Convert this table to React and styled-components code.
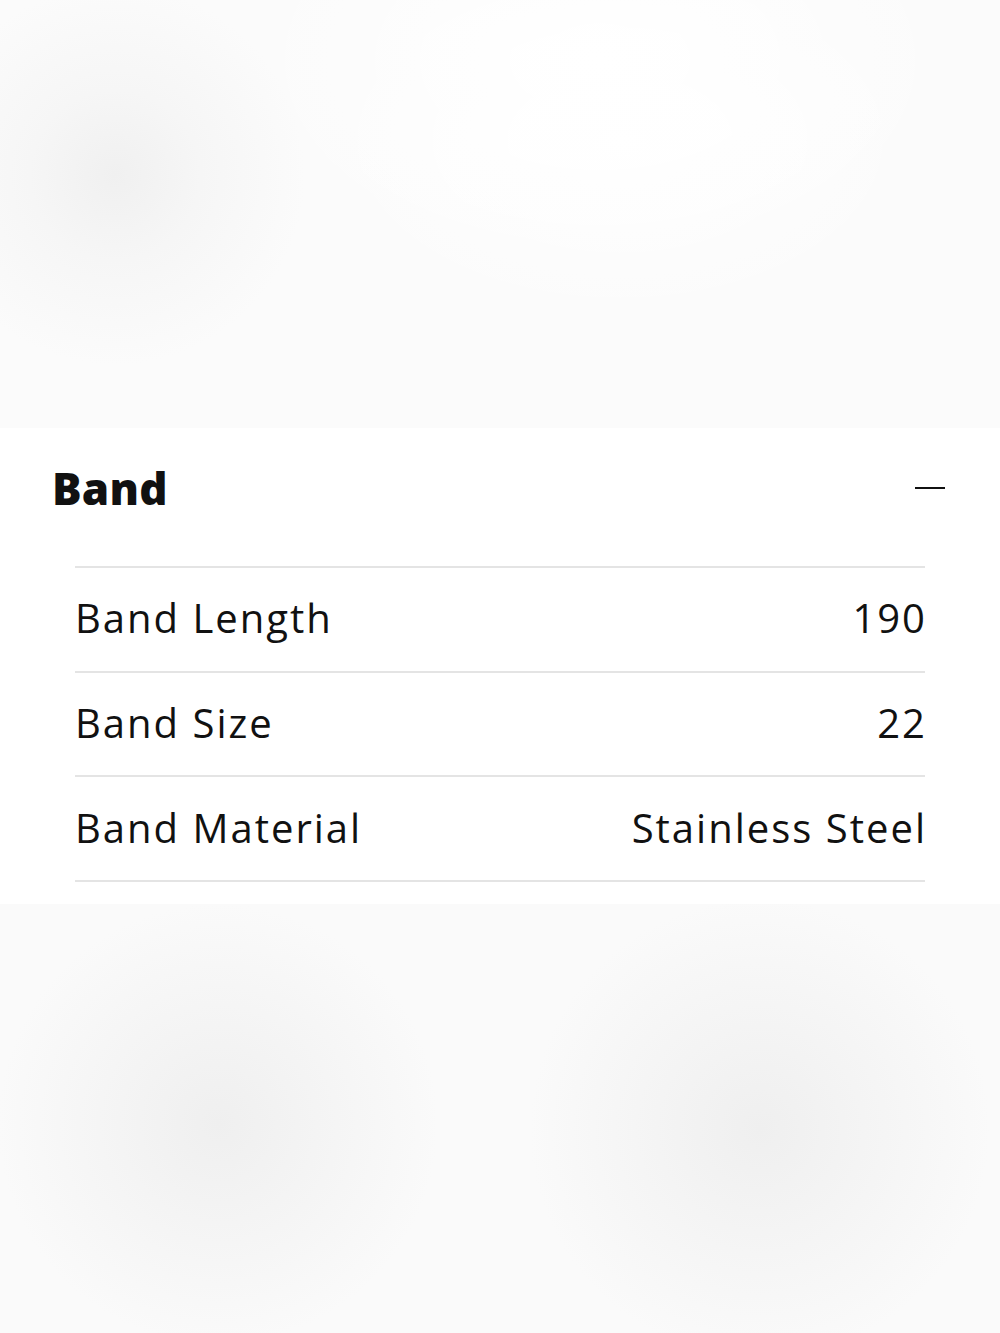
import React from 'react'
import styled, { createGlobalStyle } from 'styled-components'

const GlobalStyle = createGlobalStyle`
  html, body {
    margin: 0;
    padding: 0;
    background: #fafafa;
  }
  body {
    font-family: "Open Sans", "Liberation Sans", sans-serif;
    color: #111;
  }
`

const Page = styled.div`
  width: 1000px;
  min-height: 1333px;
  display: flex;
  flex-direction: column;
  background: #fafafa;
`

const Backdrop = styled.div`
  height: ${props => props.h}px;
  background: ${props => props.bg};
`

const Panel = styled.section`
  background: #fff;
  padding: 0 55px 22px 52px;
`

const Header = styled.div`
  height: 120px;
  padding-bottom: 18px;
  display: flex;
  align-items: center;
  justify-content: space-between;
`

const Title = styled.h2`
  margin: 0;
  font-size: 44px;
  font-weight: 800;
  letter-spacing: 0.2px;
  color: #111;
`

const Toggle = styled.button`
  width: 30px;
  height: 30px;
  padding: 0;
  border: 0;
  background: transparent;
  display: flex;
  align-items: center;
  cursor: pointer;
  &::before {
    content: "";
    display: block;
    width: 30px;
    height: 2px;
    background: #111;
  }
`

const Specs = styled.div`
  margin: 0 20px 0 23px;
  border-top: 2px solid #e4e4e4;
`

const Row = styled.div`
  height: 104.67px;
  box-sizing: border-box;
  padding-bottom: 3px;
  display: flex;
  align-items: center;
  justify-content: space-between;
  border-bottom: 2px solid #e4e4e4;
  font-size: 40px;
  letter-spacing: 2px;
  color: #111;
`

const Label = styled.span``
const Value = styled.span`
  margin-right: -2px;
`

const specs = [
  { label: 'Band Length', value: '190' },
  { label: 'Band Size', value: '22' },
  { label: 'Band Material', value: 'Stainless Steel' },
]

const topBg = `
  radial-gradient(circle 190px at 115px 175px, #f0f0f0 0%, #f6f6f6 45%, rgba(250,250,250,0) 100%),
  radial-gradient(ellipse 360px 220px at 600px 60px, #ffffff 0%, rgba(255,255,255,0) 100%),
  radial-gradient(ellipse 300px 180px at 620px 140px, #ffffff 0%, rgba(255,255,255,0) 100%),
  #fbfbfb
`

const bottomBg = `
  radial-gradient(circle 220px at 218px 220px, #efefef 0%, #f4f4f4 45%, rgba(250,250,250,0) 100%),
  radial-gradient(circle 230px at 760px 225px, #efefef 0%, #f4f4f4 45%, rgba(250,250,250,0) 100%),
  #fafafa
`

const App = () => {
  return (
    <>
      <GlobalStyle />
      <Page>
        <Backdrop h={428} bg={topBg} />
        <Panel>
          <Header>
            <Title>Band</Title>
            <Toggle aria-label="Collapse" />
          </Header>
          <Specs>
            {specs.map(s => (
              <Row key={s.label}>
                <Label>{s.label}</Label>
                <Value>{s.value}</Value>
              </Row>
            ))}
          </Specs>
        </Panel>
        <Backdrop h={430} bg={bottomBg} />
      </Page>
    </>
  )
}

export default App
